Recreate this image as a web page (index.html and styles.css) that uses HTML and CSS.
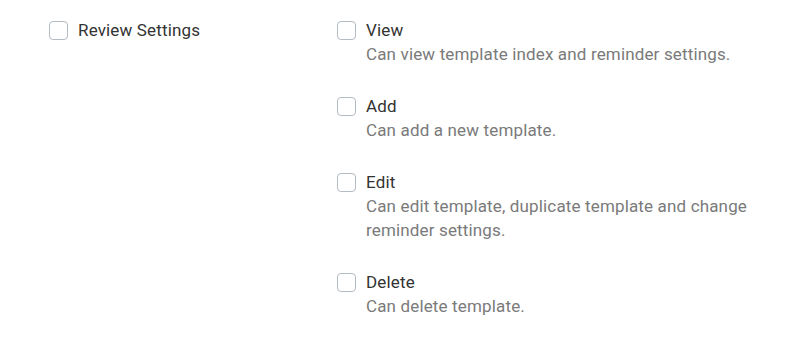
FILE: index.html
```html
<!DOCTYPE html>
<html>
<head>
<meta charset="utf-8">
<link rel="stylesheet" href="styles.css">
</head>
<body>
<div class="perm">
  <div class="group">
    <label class="check">
      <span class="box"></span>
      <span class="label">Review Settings</span>
    </label>
  </div>
  <div class="items">
    <div class="item">
      <label class="check">
        <span class="box"></span>
        <span class="label">View</span>
      </label>
      <p class="desc">Can view template index and reminder settings.</p>
    </div>
    <div class="item">
      <label class="check">
        <span class="box"></span>
        <span class="label">Add</span>
      </label>
      <p class="desc">Can add a new template.</p>
    </div>
    <div class="item">
      <label class="check">
        <span class="box"></span>
        <span class="label">Edit</span>
      </label>
      <p class="desc">Can edit template, duplicate template and change reminder settings.</p>
    </div>
    <div class="item">
      <label class="check">
        <span class="box"></span>
        <span class="label">Delete</span>
      </label>
      <p class="desc">Can delete template.</p>
    </div>
  </div>
</div>
</body>
</html>
```
FILE: styles.css
```css
html, body {
  margin: 0;
  padding: 0;
  background: #ffffff;
}
body {
  font-family: Roboto, "Liberation Sans", sans-serif;
  font-size: 17px;
  line-height: 24px;
  letter-spacing: 0.15px;
}
.perm {
  display: grid;
  grid-template-columns: 288px 1fr;
  padding: 18px 40px 0 49px;
}
.check {
  display: flex;
  align-items: center;
  gap: 10px;
}
.box {
  width: 17px;
  height: 17px;
  border: 1px solid #b4bcc4;
  border-radius: 4px;
  background: #fff;
  flex: none;
}
.label {
  color: #333333;
}
.items {
  display: flex;
  flex-direction: column;
  gap: 28px;
}
.desc {
  margin: 0;
  padding-left: 29px;
  color: #7a7a7a;
}
```
